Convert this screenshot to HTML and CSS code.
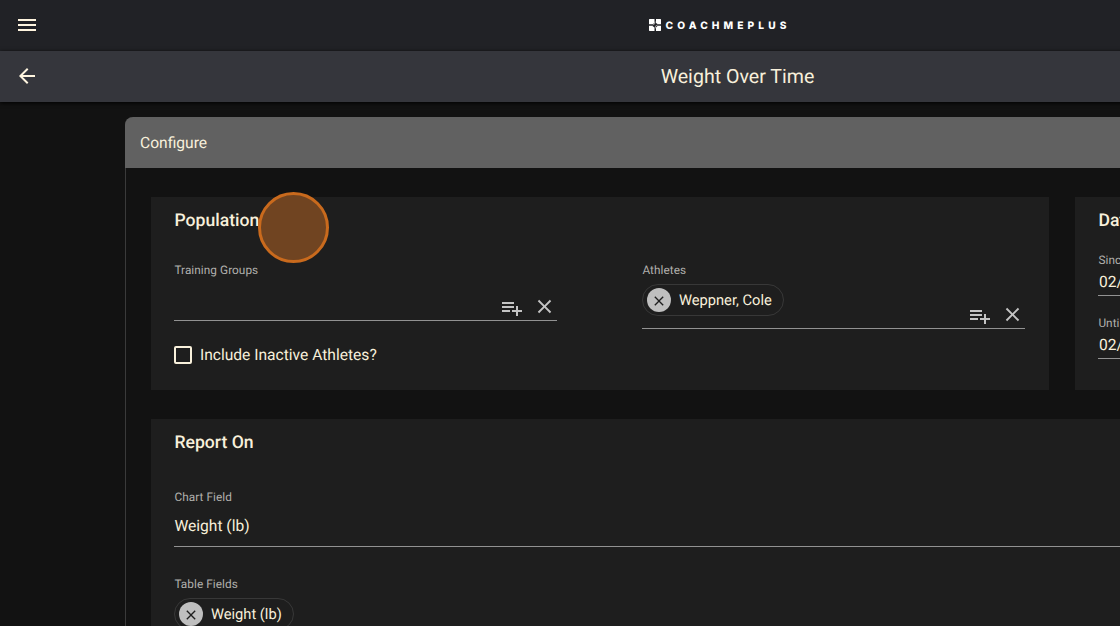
FILE: index.html
```
<!DOCTYPE html>
<html lang="en">
<head>
  <meta charset="utf-8">
  <title>Weight Over Time</title>
  <link rel="stylesheet" href="styles.css">
</head>
<body>
<svg class="defs">
  <symbol id="icon_close" viewBox="0 0 24 24">
    <path d="M19 6.41L17.59 5 12 10.59 6.41 5 5 6.41 10.59 12 5 17.59 6.41 19 12 13.41 17.59 19 19 17.59 13.41 12z"/>
  </symbol>
  <symbol id="icon_add" viewBox="0 0 24 24">
    <path d="M14 10H2v2h12v-2zm0-4H2v2h12V6zm4 8v-4h-2v4h-4v2h4v4h2v-4h4v-2h-4zM2 16h8v-2H2v2z"/>
  </symbol>
</svg>
<div class="wrap">
  <div class="topbar">
    <button class="nav_btn">
      <svg viewBox="0 0 24 24"><path d="M3 18h18v-2H3v2zm0-5h18v-2H3v2zm0-7v2h18V6H3z"/></svg>
    </button>
    <div class="logo">
      <svg viewBox="0 0 24 24">
        <path d="M1 0H11V8L8 10H0V1zM14 0H23L24 1V10H17L14 8zM0 14H7L11 17V24H1L0 23zM17 14H24V23L23 24H14V17z"/>
        <path class="logo_line" d="M0 12H7Q12 12 12.5 5M12.5 19Q12 12 17 12H24"/>
      </svg>
      <span>COACHMEPLUS</span>
    </div>
  </div>
  <div class="titlebar">
    <button class="nav_btn">
      <svg viewBox="0 0 24 24"><path d="M20 11H7.83l5.59-5.59L12 4l-8 8 8 8 1.41-1.41L7.83 13H20v-2z"/></svg>
    </button>
    <h1>Weight Over Time</h1>
  </div>
  <div class="panel">
    <div class="panel_title">Configure</div>
    <div class="panel_body">
      <div class="card population">
        <h2>Population</h2>
        <div class="marker"></div>
        <div class="columns">
          <div class="column">
            <label>Training Groups</label>
            <div class="picker">
              <svg class="add"><use href="#icon_add"/></svg>
              <svg class="clear"><use href="#icon_close"/></svg>
            </div>
            <div class="check">
              <span class="box"></span>
              <span>Include Inactive Athletes?</span>
            </div>
          </div>
          <div class="column">
            <label>Athletes</label>
            <div class="picker filled">
              <div class="chip">
                <span class="chip_btn"><svg><use href="#icon_close"/></svg></span>
                <span>Weppner, Cole</span>
              </div>
              <svg class="add"><use href="#icon_add"/></svg>
              <svg class="clear"><use href="#icon_close"/></svg>
            </div>
          </div>
        </div>
      </div>
      <div class="card dates">
        <h2>Date Range</h2>
        <label>Since</label>
        <div class="date">02/01/2022</div>
        <label>Until</label>
        <div class="date">02/28/2022</div>
      </div>
      <div class="card report">
        <h2>Report On</h2>
        <label>Chart Field</label>
        <div class="select">Weight (lb)</div>
        <label>Table Fields</label>
        <div class="chip">
          <span class="chip_btn"><svg><use href="#icon_close"/></svg></span>
          <span>Weight (lb)</span>
        </div>
      </div>
    </div>
  </div>
</div>
</body>
</html>
```
FILE: styles.css
```
*{
  box-sizing: border-box;
}
body{
  margin: 0;
  height: 626px;
  overflow: hidden;
  background: #121212;
  color: #f8f0db;
  font-family: Roboto, sans-serif;
  font-size: 15.6px;
  text-rendering: geometricPrecision;
}
h1, h2{
  margin: 0;
}
svg{
  display: block;
  fill: currentColor;
}
.defs{
  display: none;
}
/* desktop layout, wider than small windows */
.wrap{
  width: 1475px;
}
.topbar, .titlebar{
  display: grid;
  grid-template-columns: 54px 1fr 54px;
  align-items: center;
  justify-items: center;
  height: 51px;
}
.topbar{
  height: 50.5px;
  background: #212226;
}
.titlebar{
  background: #35363c;
  box-shadow: 0 1px 4px #000;
}
.titlebar h1{
  font-size: 19.6px;
  font-weight: 400;
}
.nav_btn{
  padding: 0;
  border: none;
  background: none;
  color: #fff5df;
}
.nav_btn svg{
  width: 24px;
  height: 24px;
}
.logo{
  display: flex;
  align-items: center;
  gap: 4px;
  margin-right: 35px;
  color: #fff;
}
.logo svg{
  width: 12px;
  height: 12px;
}
.logo_line{
  fill: none;
  stroke: #fff;
  stroke-width: 1;
}
.logo span{
  padding-top: 2px;
  font-family: Inter, sans-serif;
  font-size: 10.2px;
  font-weight: 800;
  line-height: 12px;
  letter-spacing: 4.1px;
}

.panel{
  width: 1225px;
  margin: 15.5px 0 0 125px;
  border-left: 1px solid #3a3a3a;
  border-radius: 8px 8px 0 0;
}
.panel_title{
  height: 51px;
  margin-left: -1px;
  padding-left: 15px;
  border-radius: 8px 8px 0 0;
  background: #616161;
  line-height: 52px;
}
.panel_body{
  display: grid;
  grid-template-columns: 898px 249px;
  grid-template-rows: 193px 400px;
  gap: 29px 26px;
  padding: 29px 25px;
}
.card{
  position: relative;
  padding: 13px 23.4px;
  background: #1e1e1e;
}
.card h2{
  font-size: 17.6px;
  font-weight: 500;
  line-height: 22px;
}
label{
  display: block;
  color: #b1b0ad;
  font-size: 11.8px;
  line-height: 14px;
  letter-spacing: 0.06px;
}
.marker{
  position: absolute;
  left: 107px;
  top: -5px;
  width: 71px;
  height: 71px;
  border: 3px solid #c96a1d;
  border-radius: 50%;
  background: #704421;
}
.columns{
  display: grid;
  grid-template-columns: 383px 383px;
  gap: 85px;
  margin-top: 31px;
}
.picker{
  display: flex;
  align-items: flex-end;
  height: 44px;
  padding-right: 1px;
  border-bottom: 1px solid #929292;
  color: #c4c4c4;
}
.picker.filled{
  height: 52px;
}
.picker .add{
  width: 24px;
  height: 24px;
  margin: 0 9px 0 auto;
}
.picker .clear{
  width: 23px;
  height: 23px;
  margin-bottom: 2px;
}
.chip{
  display: flex;
  align-items: center;
  gap: 7.5px;
  width: max-content;
  height: 32px;
  padding: 0 11.5px 0 4px;
  border: 1px solid #383838;
  border-radius: 16px;
  color: #f8f0db;
  font-size: 14.7px;
}
.picker .chip{
  align-self: flex-start;
  margin-top: 7px;
}
.chip_btn{
  width: 24px;
  height: 24px;
  padding: 5px 4px 3px;
  border-radius: 50%;
  background: #bfbfbf;
  color: #1e1e1e;
}
.chip_btn svg{
  width: 16px;
  height: 16px;
}
.check{
  display: flex;
  align-items: center;
  gap: 7.5px;
  margin-top: 25.4px;
}
.box{
  width: 18px;
  height: 18px;
  border: 2px solid #f8f0db;
  border-radius: 2px;
}
.dates h2{
  margin-bottom: 21px;
}
.date{
  height: 29px;
  margin-bottom: 19.5px;
  padding-left: 0.5px;
  border-bottom: 1px solid #929292;
  line-height: 30px;
}
.report{
  grid-column: 1 / 3;
}
.report h2{
  margin-bottom: 36px;
}
.select{
  height: 43px;
  margin-bottom: 30px;
  border-bottom: 1px solid #929292;
  line-height: 45px;
}
.report .chip{
  margin-top: 7px;
}
```
